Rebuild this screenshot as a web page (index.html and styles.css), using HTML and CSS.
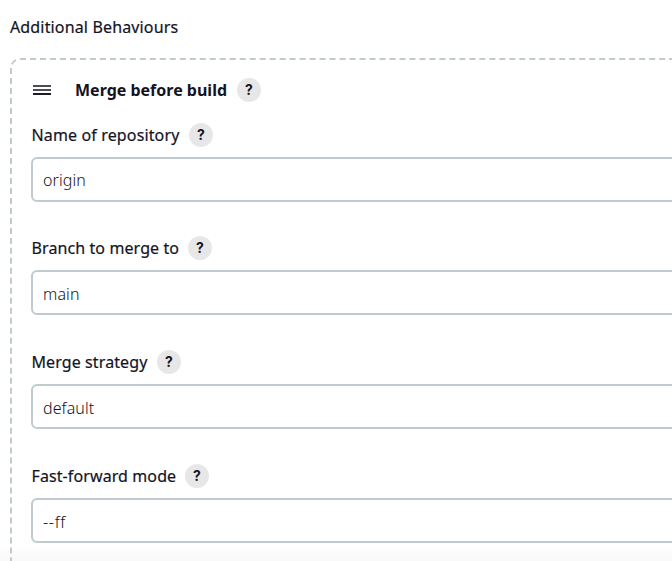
FILE: index.html
```html
<!DOCTYPE html>
<html lang="en">
<head>
<meta charset="utf-8">
<title>Additional Behaviours</title>
<link rel="stylesheet" href="styles.css">
</head>
<body>
<main class="page">
  <h1 class="section-title">Additional Behaviours</h1>
  <section class="chunk">
    <header class="chunk-header">
      <svg class="handle" width="18" height="10" viewBox="0 0 18 10"><path d="M0 1h18M0 5h18" stroke="#4c4c56" stroke-width="2"/><path d="M0 9h18" stroke="#1c1c27" stroke-width="2"/></svg>
      <b class="chunk-title">Merge before build</b>
      <span class="help">?</span>
    </header>
    <div class="field first">
      <div class="label"><span class="label-text name">Name of repository</span><span class="help">?</span></div>
      <div class="input">origin</div>
    </div>
    <div class="field">
      <div class="label"><span class="label-text branch">Branch to merge to</span><span class="help">?</span></div>
      <div class="input">main</div>
    </div>
    <div class="field">
      <div class="label"><span class="label-text strategy">Merge strategy</span><span class="help">?</span></div>
      <div class="input">default</div>
    </div>
    <div class="field">
      <div class="label"><span class="label-text mode">Fast-forward mode</span><span class="help">?</span></div>
      <div class="input flag">--ff</div>
    </div>
  </section>
</main>
</body>
</html>
```
FILE: styles.css
```css
* { box-sizing: border-box; }
body {
  margin: 0;
  background: #fff;
  color: #14141f;
  font-family: "Noto Sans", sans-serif;
  font-size: 16px;
  line-height: 24px;
}
.page {
  height: 561px;
  padding: 15px 0 0 10px;
  overflow: hidden;
  background: linear-gradient(#fff 545px, #f8f8f8 561px);
}
.section-title { margin: 0 0 19px; font-size: 16px; font-weight: 400; letter-spacing: 0.15px; -webkit-text-stroke: 0.2px #14141f; }
.chunk {
  width: 890px;
  height: 620px;
  padding: 18px 20px 0 19px;
  border: 2px dashed #bfcbcf;
  border-radius: 10px;
}
.chunk-header { display: flex; align-items: center; height: 24px; margin-bottom: 21px; }
.handle { margin: 0 24px 0 2px; }
.chunk-title { width: 152px; margin-right: 10px; font-weight: 700; white-space: nowrap; }
.help {
  width: 24px;
  height: 24px;
  border-radius: 50%;
  background: #e7e7e7;
  font-family: Inter, sans-serif;
  font-size: 14px;
  font-weight: 700;
  text-align: center;
}
.field { height: 114px; }
.field.first { height: 113px; }
.label { display: flex; gap: 9px; height: 24px; margin-bottom: 10px; white-space: nowrap; }
.label-text { padding-left: 0.5px; letter-spacing: 0.1px; -webkit-text-stroke: 0.2px #14141f; }
.name { width: 149px; letter-spacing: 0.14px; }
.branch { width: 148px; }
.strategy { width: 117px; }
.mode { width: 145px; }
.input {
  height: 45px;
  padding: 10px 10px 0;
  border: 2px solid #bfcbcf;
  border-radius: 6px;
  background: #fff;
  font-weight: 300;
  letter-spacing: 0.1px;
}
.first .input { padding-top: 9px; }
.flag { letter-spacing: 0.7px; }
```
